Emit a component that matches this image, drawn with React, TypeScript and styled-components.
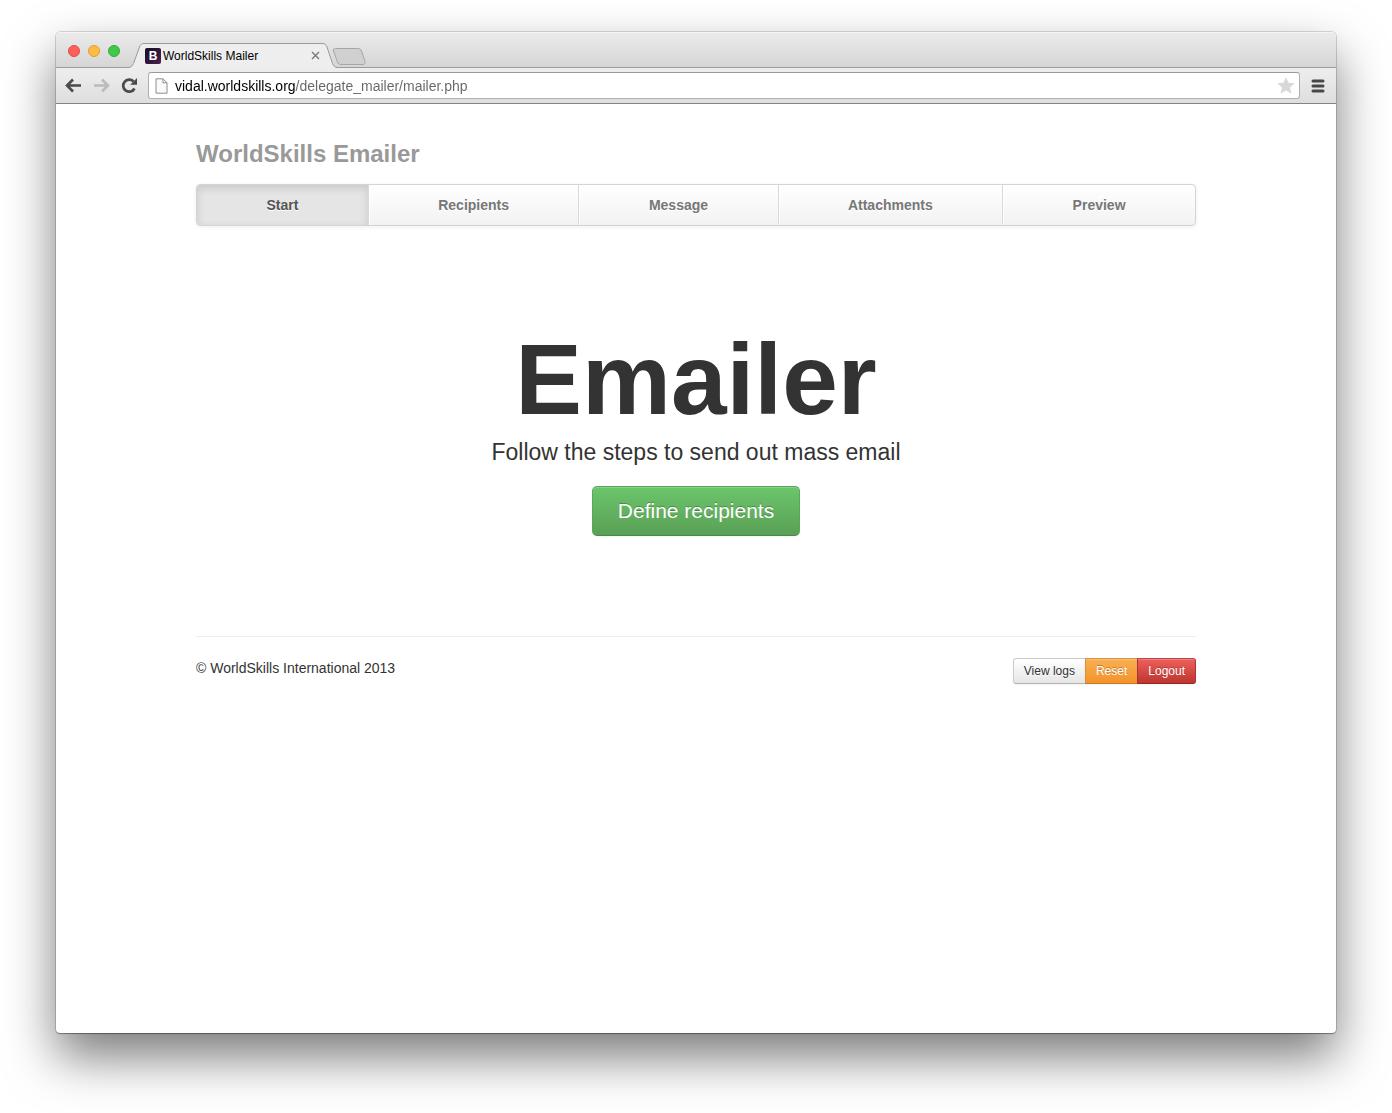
import React from "react";
import styled, { createGlobalStyle, css } from "styled-components";

const GlobalStyle = createGlobalStyle`
  *, *::before, *::after { box-sizing: border-box; }
  body {
    margin: 0;
    background: #fff;
    color: #333;
    font: 14px/20px "Liberation Sans", Arial, sans-serif;
  }
  button, input { font-family: inherit; }
`;

const Desktop = styled.div`
  display: flex;
  min-height: 100vh;
  padding: 32px 56px 80px;
`;

const BrowserWindow = styled.div`
  flex: 1;
  min-width: 0;
  border-radius: 5px 5px 4px 4px;
  background: #fff;
  box-shadow: 0 0 0 1px rgba(0, 0, 0, 0.14), 0 1px 1px rgba(0, 0, 0, 0.3),
    0 24px 50px rgba(0, 0, 0, 0.52);
`;

const TabStrip = styled.div`
  display: flex;
  align-items: flex-end;
  height: 36px;
  padding-left: 12px;
  border-radius: 5px 5px 0 0;
  background: linear-gradient(#ebebeb, #d5d5d5);
  box-shadow: inset 0 1px 0 #f4f4f4, inset 0 -1px 0 #9b9b9b;
`;

const WindowControls = styled.div`
  display: flex;
  gap: 8px;
  align-self: center;
  margin: 2px 8px 0 0;
`;

const WindowControl = styled.button<{ $fill: string; $edge: string }>`
  width: 12px;
  height: 12px;
  padding: 0;
  border: 1px solid ${(p) => p.$edge};
  border-radius: 50%;
  background: ${(p) => p.$fill};
`;

const Tab = styled.div`
  position: relative;
  display: flex;
  align-items: center;
  gap: 2px;
  width: 210px;
  height: 25px;
  padding: 0 18px 0 17px;
  color: #000;
  font-size: 12px;
  line-height: 16px;
`;

const TabShape = styled.svg`
  position: absolute;
  inset: 0;
`;

const Favicon = styled.span`
  position: relative;
  width: 16px;
  height: 16px;
  border-radius: 2px;
  background: linear-gradient(135deg, #150d24, #472050);
  color: #fff;
  font-size: 12px;
  font-weight: bold;
  text-align: center;
`;

const TabTitle = styled.span`
  position: relative;
  flex: 1;
`;

const TabClose = styled.button`
  position: relative;
  display: flex;
  padding: 0;
  border: 0;
  background: none;
`;

const NewTab = styled.button`
  display: flex;
  align-self: flex-end;
  margin: 0 0 3px -6px;
  padding: 0;
  border: 0;
  background: none;
`;

const Toolbar = styled.div`
  display: flex;
  align-items: center;
  height: 36px;
  padding: 0 8px 0 4px;
  border-bottom: 1px solid #838383;
  background: linear-gradient(#eeeeee, #dedede);
`;

const ToolButton = styled.button`
  display: flex;
  justify-content: center;
  width: 28px;
  padding: 0;
  border: 0;
  background: none;
`;

const AddressBar = styled.label`
  display: flex;
  flex: 1;
  align-items: center;
  gap: 7px;
  height: 27px;
  margin: 0 8px 0 4px;
  padding: 0 4px 0 6px;
  border: 1px solid #b0b0b0;
  border-top-color: #999;
  border-radius: 3px;
  background: #fff;
`;

const AddressInput = styled.input`
  flex: 1;
  min-width: 0;
  padding: 0;
  border: 0;
  outline: 0;
  background: linear-gradient(to right, #000 120px, #666 120px);
  background-clip: text;
  color: transparent;
  font-size: 14px;
  line-height: 20px;
`;

const MenuButton = styled(ToolButton)`
  width: 20px;
`;

const Page = styled.div`
  max-width: 1040px;
  margin: 0 auto;
  padding: 20px;
`;

const SiteTitle = styled.h3`
  margin: 10px 0;
  color: #999;
  font-size: 24px;
  line-height: 40px;
`;

const Nav = styled.nav`
  display: flex;
  overflow: hidden;
  border: 1px solid #d4d4d4;
  border-radius: 4px;
  background: linear-gradient(#fff, #f2f2f2);
  box-shadow: 0 1px 4px rgba(0, 0, 0, 0.065);
`;

const NavLink = styled.a<{ $active?: boolean }>`
  flex: 1 1 auto;
  padding: 10px 0;
  border-right: 1px solid #d9d9d9;
  color: #777;
  font-weight: bold;
  text-align: center;
  text-decoration: none;
  text-shadow: 0 1px 0 #fff;
  box-shadow: inset 1px 0 0 #fff;
  &:last-child { border-right: 0; }
  ${(p) =>
    p.$active &&
    css`
      background: #e5e5e5;
      color: #555;
      box-shadow: inset 0 3px 8px rgba(0, 0, 0, 0.125);
    `}
`;

const Hero = styled.main`
  display: flex;
  flex-direction: column;
  align-items: center;
  padding: 103px 0 100px;
  text-align: center;
`;

const HeroTitle = styled.h1`
  margin: 0;
  font-size: 100px;
  line-height: 100px;
`;

const Lead = styled.p`
  margin: 8px 0 19px;
  font-size: 23px;
  line-height: 30px;
`;

const PrimaryButton = styled.button`
  height: 50px;
  padding: 0 25px;
  border: 1px solid;
  border-color: #57a957 #57a957 #458a48;
  border-radius: 5px;
  background: linear-gradient(#6cc56c, #5aa055);
  box-shadow: inset 0 1px 0 rgba(255, 255, 255, 0.2), 0 1px 2px rgba(0, 0, 0, 0.05);
  color: #fff;
  font-size: 21px;
  line-height: 30px;
  text-shadow: 0 -1px 0 rgba(0, 0, 0, 0.25);
`;

const Footer = styled.footer`
  display: flex;
  justify-content: space-between;
  padding-top: 21px;
  border-top: 1px solid #eee;
`;

const Copyright = styled.p`
  margin: 0;
`;

const ButtonGroup = styled.div`
  display: flex;
`;

const tones = {
  plain: css`
    border-color: #ccc #ccc #b3b3b3;
    background: linear-gradient(#fff, #e6e6e6);
    color: #333;
    text-shadow: 0 1px 1px rgba(255, 255, 255, 0.75);
  `,
  warning: css`
    border-color: #d6933e #d6933e #c67c1d;
    background: linear-gradient(#f8b054, #f5922a);
    color: #fff;
    text-shadow: 0 -1px 0 rgba(0, 0, 0, 0.25);
  `,
  danger: css`
    border-color: #bd4247 #a93338 #942a25;
    background: linear-gradient(#ee5f5b, #bd362f);
    color: #fff;
    text-shadow: 0 -1px 0 rgba(0, 0, 0, 0.25);
  `,
};

const SmallButton = styled.button<{ $tone: keyof typeof tones }>`
  height: 26px;
  padding: 0 10px;
  border: 1px solid;
  font-size: 12px;
  line-height: 20px;
  box-shadow: inset 0 1px 0 rgba(255, 255, 255, 0.2), 0 1px 2px rgba(0, 0, 0, 0.05);
  ${(p) => tones[p.$tone]}
  &:first-child { border-radius: 3px 0 0 3px; }
  &:last-child { border-radius: 0 3px 3px 0; }
  &:not(:first-child) { margin-left: -1px; }
`;

const steps = ["Start", "Recipients", "Message", "Attachments", "Preview"];

function Chrome() {
  return (
    <header>
      <TabStrip>
        <WindowControls>
          <WindowControl aria-label="Close window" $fill="#fc605c" $edge="#e04b46" />
          <WindowControl aria-label="Minimize window" $fill="#fdbc40" $edge="#dea034" />
          <WindowControl aria-label="Zoom window" $fill="#3fc84a" $edge="#2fae38" />
        </WindowControls>
        <Tab>
          <TabShape width="210" height="25" viewBox="0 0 210 25" aria-hidden="true">
            <path
              d="M0 24.5C3 24.5 4.500 23 5.500 20.500L11.500 4C12.500 1.500 13.500 .5 16 .5H194C197 .5 198 1.500 199 4L204.500 20.500C205.500 23 206.500 24.500 210 24.500V25H0Z"
              fill="#eee"
            />
            <path
              d="M0 24.5C3 24.5 4.500 23 5.500 20.500L11.500 4C12.500 1.500 13.500 .5 16 .5H194C197 .5 198 1.500 199 4L204.500 20.500C205.500 23 206.500 24.500 210 24.500"
              fill="none"
              stroke="#9b9b9b"
            />
          </TabShape>
          <Favicon>B</Favicon>
          <TabTitle>WorldSkills Mailer</TabTitle>
          <TabClose aria-label="Close tab">
            <svg width="9" height="9" viewBox="0 0 9 9">
              <path d="M1 1l7 7M8 1l-7 7" stroke="#777" strokeWidth="1.400" />
            </svg>
          </TabClose>
        </Tab>
        <NewTab aria-label="New tab">
          <svg width="34" height="17" viewBox="0 0 34 17">
            <path
              d="M3.500 .5H26C28 .5 29 1.500 29.500 3L33 13.500C33.500 15.500 32.500 16.500 31 16.500H9C7 16.500 6 15.500 5.500 14L1.500 3C1 1.500 1.500 .5 3.500 .5Z"
              fill="#d0d0d0"
              stroke="#a6a6a6"
            />
          </svg>
        </NewTab>
      </TabStrip>
      <Toolbar>
        <ToolButton aria-label="Back">
          <svg width="20" height="18" viewBox="0 0 20 18">
            <path d="M17 8.500H3.500M9 2.500L3 8.500l6 6" fill="none" stroke="#4a4a4a" strokeWidth="2.600" />
          </svg>
        </ToolButton>
        <ToolButton aria-label="Forward">
          <svg width="20" height="18" viewBox="0 0 20 18">
            <path d="M2 8.500H15.500M10 2.500l6 6l-6 6" fill="none" stroke="#bbb" strokeWidth="2.600" />
          </svg>
        </ToolButton>
        <ToolButton aria-label="Reload">
          <svg width="20" height="18" viewBox="0 0 20 18">
            <path d="M14.500 11.500A6 6 0 1 1 13.500 4.500" fill="none" stroke="#4a4a4a" strokeWidth="2.700" />
            <path d="M17 1V7.800H10.200Z" fill="#4a4a4a" />
          </svg>
        </ToolButton>
        <AddressBar>
          <svg width="13" height="16" viewBox="0 0 13 16" aria-hidden="true">
            <path d="M1 .8H8L12 4.800V15.200H1Z M8 .8V4.800H12" fill="#fafafa" stroke="#8c8c8c" />
          </svg>
          <AddressInput
            aria-label="Address"
            defaultValue="vidal.worldskills.org/delegate_mailer/mailer.php"
            spellCheck={false}
          />
          <svg width="18" height="17" viewBox="0 0 18 17" aria-hidden="true">
            <path d="M9 0L11.500 5.800L17.700 6.300L13 10.500L14.400 16.700L9 13.400L3.600 16.700L5 10.500L.3 6.300L6.500 5.800Z" fill="#d8d8d8" />
          </svg>
        </AddressBar>
        <MenuButton aria-label="Menu">
          <svg width="14" height="14" viewBox="0 0 14 14">
            <path d="M2 2H12M2 7H12M2 12H12" stroke="#4a474a" strokeWidth="3" strokeLinecap="round" />
          </svg>
        </MenuButton>
      </Toolbar>
    </header>
  );
}

export default function App() {
  return (
    <>
      <GlobalStyle />
      <Desktop>
        <BrowserWindow>
          <Chrome />
          <Page>
            <SiteTitle>WorldSkills Emailer</SiteTitle>
            <Nav>
              {steps.map((step, i) => (
                <NavLink key={step} href={`#${step.toLowerCase()}`} $active={i === 0}>
                  {step}
                </NavLink>
              ))}
            </Nav>
            <Hero>
              <HeroTitle>Emailer</HeroTitle>
              <Lead>Follow the steps to send out mass email</Lead>
              <PrimaryButton>Define recipients</PrimaryButton>
            </Hero>
            <Footer>
              <Copyright>© WorldSkills International 2013</Copyright>
              <ButtonGroup>
                <SmallButton $tone="plain">View logs</SmallButton>
                <SmallButton $tone="warning">Reset</SmallButton>
                <SmallButton $tone="danger">Logout</SmallButton>
              </ButtonGroup>
            </Footer>
          </Page>
        </BrowserWindow>
      </Desktop>
    </>
  );
}
